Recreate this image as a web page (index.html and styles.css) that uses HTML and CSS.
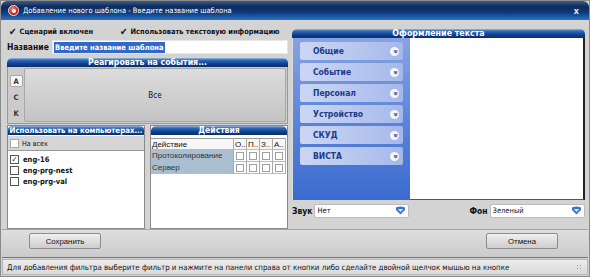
FILE: index.html
```html
<!DOCTYPE html>
<html lang="ru">
<head>
<meta charset="utf-8">
<title>Добавление нового шаблона</title>
<link rel="stylesheet" href="styles.css">
</head>
<body>
<div class="win">
  <div class="title">
    <span class="ico"><span class="ico-in"></span></span>
    <span class="ttext">Добавление нового шаблона - Введите название шаблона</span>
    <span class="close">x</span>
  </div>
  <div class="main">
    <div class="left">
      <div class="checks">
        <div class="chk c1"><span class="tick">✔</span>Сценарий включен</div>
        <div class="chk c2"><span class="tick">✔</span>Использовать текстовую информацию</div>
      </div>
      <div class="name-row">
        <span class="lbl">Название</span>
        <div class="input"><span class="sel">Введите название шаблона</span></div>
      </div>
      <div class="panel events">
        <div class="phead h-ev">Реагировать на события...</div>
        <div class="ebody">
          <div class="tabs">
            <div class="tab active">A</div>
            <div class="tab">C</div>
            <div class="tab">K</div>
          </div>
          <div class="all">Все</div>
        </div>
      </div>
      <div class="bottom">
        <div class="panel comps">
          <div class="phead h-comp">Использовать на компьютерах...</div>
          <div class="allrow"><span class="box"></span>На всех</div>
          <div class="list">
            <div class="item"><span class="box checked">✓</span>eng-16</div>
            <div class="item"><span class="box"></span>eng-prg-nest</div>
            <div class="item"><span class="box"></span>eng-prg-val</div>
          </div>
        </div>
        <div class="panel acts">
          <div class="phead h-act">Действия</div>
          <div class="tablewrap">
            <div class="trow thead">
              <div class="c-name">Действие</div><div class="c">О..</div><div class="c">П..</div><div class="c">З..</div><div class="c">А..</div>
            </div>
            <div class="trow tdata">
              <div class="c-name">Протоколирование</div><div class="c"><span class="sq"></span></div><div class="c"><span class="sq"></span></div><div class="c"><span class="sq"></span></div><div class="c"><span class="sq"></span></div>
            </div>
            <div class="trow tdata">
              <div class="c-name">Сервер</div><div class="c"><span class="sq"></span></div><div class="c"><span class="sq"></span></div><div class="c"><span class="sq"></span></div><div class="c"><span class="sq"></span></div>
            </div>
          </div>
        </div>
      </div>
    </div>
    <div class="right">
      <div class="phead h-right">Оформление текста</div>
      <div class="rbody">
        <div class="acc">
          <div class="aitem"><span>Общие</span><span class="chev">»</span></div>
          <div class="aitem"><span>Событие</span><span class="chev">»</span></div>
          <div class="aitem"><span>Персонал</span><span class="chev">»</span></div>
          <div class="aitem"><span>Устройство</span><span class="chev">»</span></div>
          <div class="aitem"><span>СКУД</span><span class="chev">»</span></div>
          <div class="aitem"><span>ВИСТА</span><span class="chev">»</span></div>
        </div>
        <div class="preview"></div>
      </div>
      <div class="srow">
        <span class="slbl">Звук</span>
        <div class="select"><span>Нет</span>
          <svg class="dd" width="11" height="9" viewBox="0 0 11 9"><path d="M1 1.5 Q5.5 -0.5 10 1.5 L10 4 L5.5 8.5 L1 4 Z" fill="#3a78c8"/><path d="M3 3 L8 3 L5.5 6 Z" fill="#dcebff"/></svg>
        </div>
        <span class="slbl fon">Фон</span>
        <div class="select"><span>Зеленый</span>
          <svg class="dd" width="11" height="9" viewBox="0 0 11 9"><path d="M1 1.5 Q5.5 -0.5 10 1.5 L10 4 L5.5 8.5 L1 4 Z" fill="#3a78c8"/><path d="M3 3 L8 3 L5.5 6 Z" fill="#dcebff"/></svg>
        </div>
      </div>
    </div>
  </div>
  <div class="buttons">
    <div class="btn">Сохранить</div>
    <div class="btn">Отмена</div>
  </div>
  <div class="status">
    <span>Для добавления фильтра выберите фильтр и нажмите на панели справа от кнопки либо сделайте двойной щелчок мышью на кнопке</span>
    <span class="grip"></span>
  </div>
</div>
</body>
</html>
```
FILE: styles.css
```css
* { box-sizing: border-box; }
html, body { margin: 0; padding: 0; background: #c8c8c8; }
body { font-family: "DejaVu Sans Condensed", "DejaVu Sans", sans-serif; font-size: 8px; color: #111; }

.win {
  width: 590px; height: 277px;
  background: #d3d3d3;
  border: 1px solid #8a8a8a;
  display: flex; flex-direction: column;
  overflow: hidden;
}

.title {
  height: 19px; flex: none;
  display: flex; align-items: center;
  background: linear-gradient(#3a5d90 0%, #0e2a58 30%, #0c3a7c 60%, #2a72c4 100%);
  border-radius: 6px 6px 0 0;
  color: #fff;
  padding: 0 10px 0 7px;
  font-size: 7.5px;
}
.ico {
  width: 11px; height: 11px; border-radius: 50%;
  background: radial-gradient(circle at 40% 35%, #ff8a7a, #d2201a 60%, #8a0a08);
  border: 1px solid #f3e0e0;
  display: flex; align-items: center; justify-content: center;
  margin-right: 4px;
}
.ico-in { width: 4px; height: 4px; border-radius: 50%; background: #fff; }
.ttext { flex: 1; }
.close { font-weight: bold; font-size: 9px; color: #dfe8f5; }

.main { display: flex; padding: 4px 4px 0 6px; gap: 4px; height: 209px; flex: none; }
.left { width: 281px; display: flex; flex-direction: column; }
.right { flex: 1; display: flex; flex-direction: column; padding-top: 5px; }

.checks { display: flex; height: 15px; align-items: center; font-weight: bold; font-size: 7.4px; padding-left: 2px; }
.chk { display: flex; align-items: center; }
.c1 { width: 111px; }
.tick { font-size: 10px; margin-right: 3px; line-height: 1; }

.name-row { display: flex; align-items: center; height: 16px; }
.lbl { font-weight: bold; font-size: 8.5px; width: 45px; }
.input { flex: 1; height: 14px; background: #fff; border: 1px solid #e6e6e6; display: flex; align-items: center; padding-left: 1px; }
.sel { background: #3268c8; color: #fff; font-weight: bold; font-size: 7.5px; padding: 0 1px; line-height: 11px; }

.panel { display: flex; flex-direction: column; }
.phead {
  height: 9px; line-height: 9px; text-align: center;
  color: #fff; font-weight: bold; font-size: 8.5px;
  background: linear-gradient(#9ab8e0 0%, #2f6cba 22%, #0e3f8a 65%, #0a2f6c 100%);
  border-radius: 5px 5px 0 0;
  flex: none; white-space: nowrap; overflow: hidden;
}
.h-ev { font-size: 8.7px; }
.h-comp { font-size: 7.8px; }
.h-right { font-size: 8.8px; }

.events { margin-top: 3px; height: 66px; }
.ebody { flex: 1; display: flex; background: #cbcbcb; border: 1px solid #9a9a9a; border-top: none; padding: 1px 1px 1px 0; }
.tabs { width: 16px; display: flex; flex-direction: column; align-items: center; gap: 4px; padding-top: 7px; }
.tab { width: 13px; height: 12px; display: flex; align-items: center; justify-content: center; font-size: 7.5px; color: #333; font-weight: bold; }
.tab.active { background: #f6f6f6; border: 1px solid #aaa; border-radius: 2px; }
.all { flex: 1; display: flex; align-items: center; justify-content: center; background: linear-gradient(#dcdcdc, #c4c4c4); border: 1px solid #a8a8a8; border-radius: 2px; font-size: 8px; }

.bottom { display: flex; gap: 5px; margin-top: 1px; flex: 1; }
.comps { width: 138px; border: 1px solid #8a8a8a; background: #fff; }
.comps .phead { border-radius: 4px 4px 0 0; }
.allrow { height: 15px; display: flex; align-items: center; background: #d6d6d6; padding-left: 2px; border-bottom: 1px solid #999; font-size: 7.1px; margin-top: 1px; }
.list { flex: 1; padding-top: 3px; padding-left: 2px; }
.item { height: 11px; display: flex; align-items: center; font-weight: bold; font-size: 7.5px; }
.box { width: 9px; height: 9px; border: 1px solid #555; background: #fff; margin-right: 4px; display: inline-flex; align-items: center; justify-content: center; font-size: 8px; font-weight: normal; line-height: 1; }
.allrow .box { border-color: #aaa; margin-right: 3px; }

.acts { flex: 1; border: 1px solid #8a8a8a; background: #fff; }
.tablewrap { padding: 3px 1px 0 0; font-family: "Liberation Sans", Arial, sans-serif; font-size: 8px; }
.trow { display: flex; height: 12px; }
.trow > div { border-right: 1px solid #aaa; border-bottom: 1px solid #bbb; display: flex; align-items: center; white-space: nowrap; overflow: hidden; }
.c-name { width: 83px; padding-left: 1px; }
.c { width: 13px; justify-content: center; }
.thead > div { background: #f7f7f7; border-top: 1px solid #999; }
.thead .c { justify-content: flex-start; padding-left: 1px; }
.tdata .c-name { background: #a9bfcf; color: #333; }
.tdata .c { background: #fff; }
.sq { width: 8px; height: 8px; border: 1px solid #a0a0a0; }

.rbody { height: 162px; display: flex; background: #dcdcdc; padding: 0 0 0 1px; }
.acc { width: 117px; background: linear-gradient(#88a3e2, #5d85d8 50%, #3b6bcf); padding: 4px 7px 0 7px; display: flex; flex-direction: column; gap: 3px; }
.aitem {
  height: 18px; display: flex; align-items: center; justify-content: space-between; flex: none;
  background: linear-gradient(90deg, #cad6f3, #aebfec 80%, #a3b7ea);
  color: #1b3a88; font-weight: bold; font-size: 8.5px;
  padding: 0 4px 0 13px; border-radius: 2px;
}
.chev { width: 9px; height: 9px; border-radius: 50%; background: #f4f6fb; color: #24407e; font-size: 8px; line-height: 8px; text-align: center; transform: rotate(90deg); display: inline-block; }
.preview { flex: 1; background: #fff; border-right: 2px solid #222; border-bottom: 1px solid #555; }

.srow { display: flex; align-items: center; height: 15px; margin-top: 3px; }
.slbl { font-weight: bold; font-size: 8.5px; margin-right: 2px; }
.fon { margin-left: 60px; }
.select { height: 14px; width: 95px; background: #fff; border: 1px solid #bbb; border-radius: 2px; display: flex; align-items: center; justify-content: space-between; padding: 0 2px 0 2px; font-size: 7.5px; }

.buttons {
  flex: none; height: 29px; display: flex; justify-content: space-between; align-items: flex-start;
  padding: 3px 30px 0 27px; border-top: 1px solid #a5a5a5; border-bottom: 1px solid #777;
  background: linear-gradient(#dedede, #cbcbcb);
  margin: 0 1px 0 1px;
}
.btn { width: 72px; height: 16px; border: 1px solid #8d8d8d; border-radius: 2px; background: linear-gradient(#f0f0f0, #cdcdcd); display: flex; align-items: center; justify-content: center; font-family: "Liberation Sans", Arial, sans-serif; font-size: 7.8px; }

.status { height: 16px; flex: none; display: flex; align-items: center; justify-content: space-between; padding: 0 4px 0 4px; background: linear-gradient(#ececec, #dadada); margin: 1px 1px 0 1px; border: 1px solid #b5b5b5; font-size: 7.8px; }
.grip { width: 7px; height: 7px; background: radial-gradient(circle, #999 40%, transparent 45%) 0 0 / 3px 3px; }
```
